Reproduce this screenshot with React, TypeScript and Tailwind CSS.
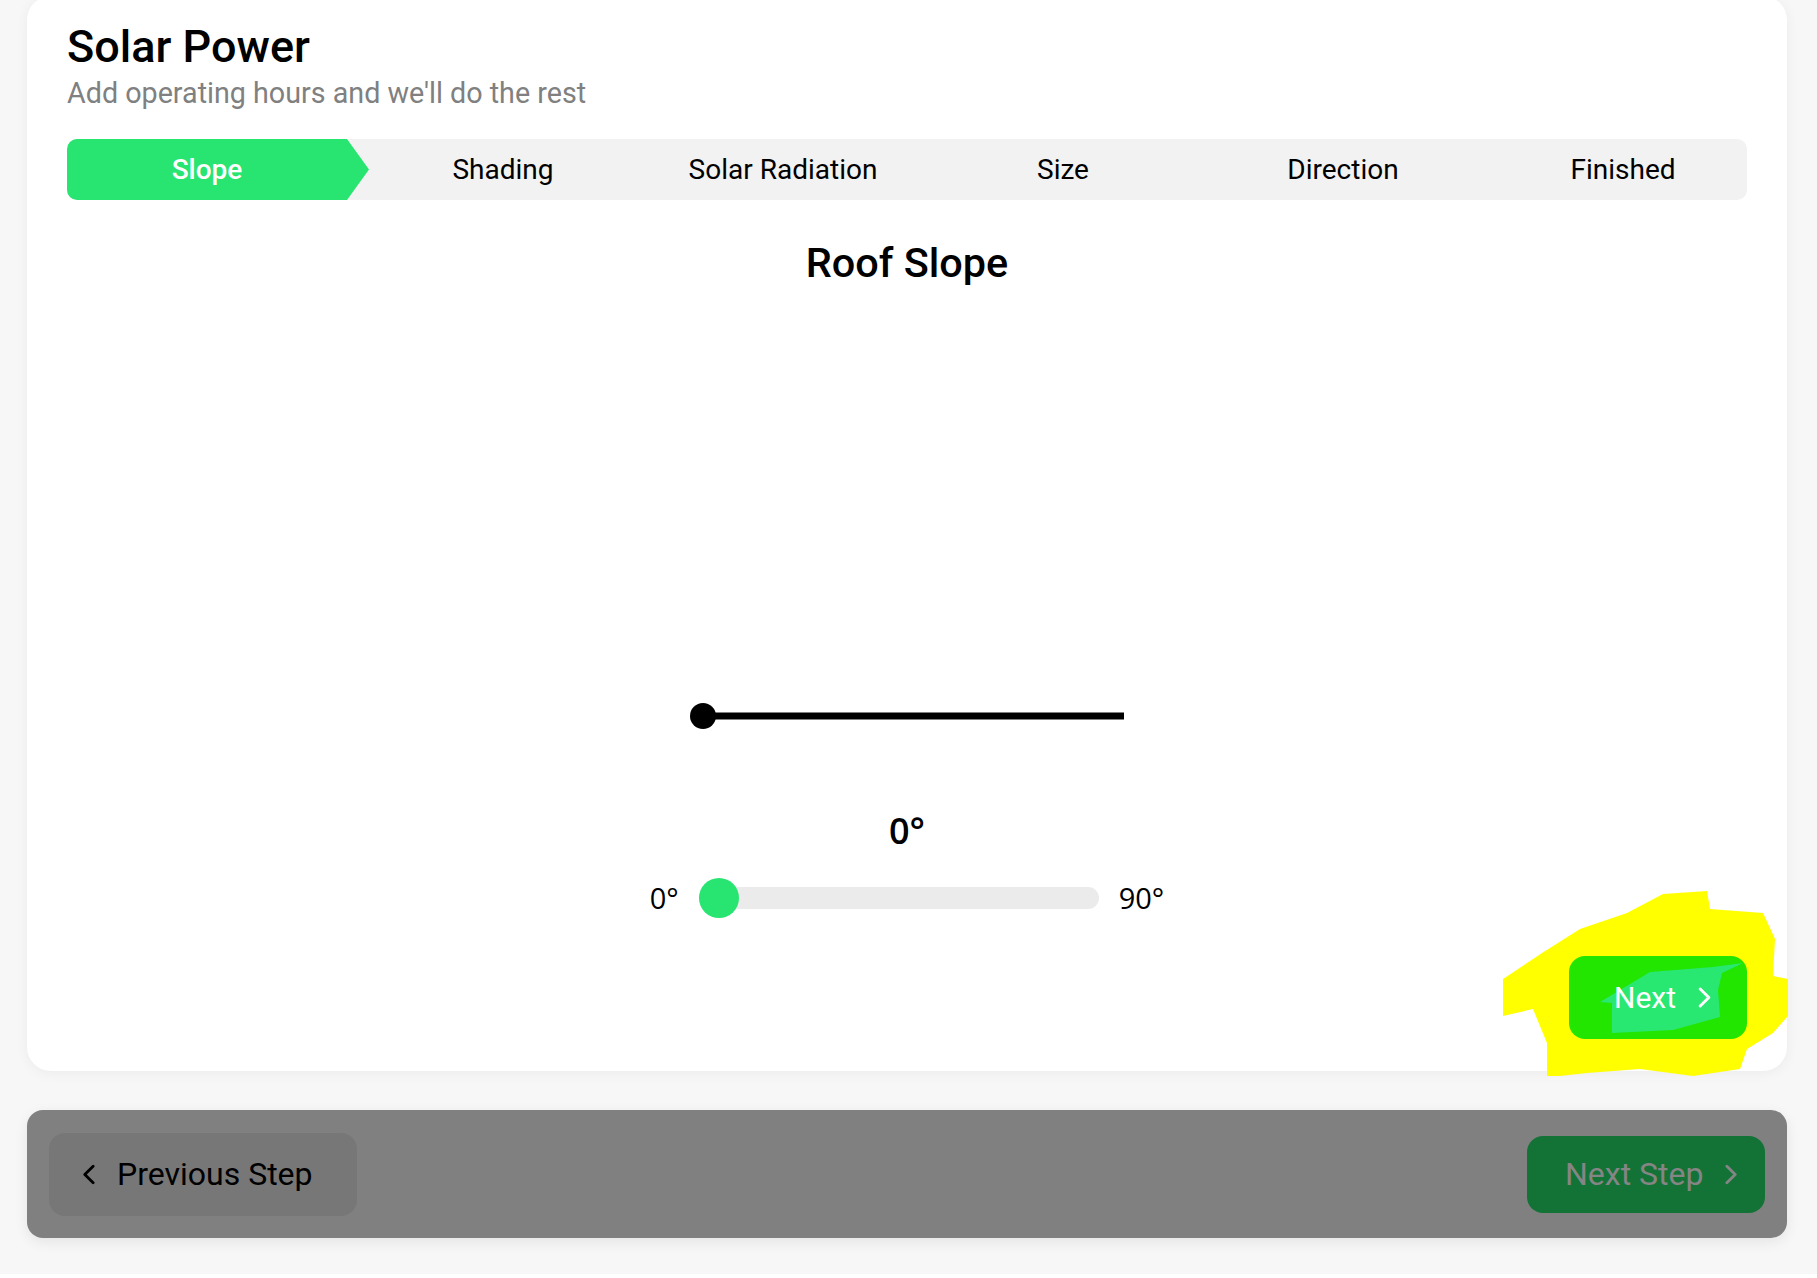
import React from "react";

const TABS = ["Slope", "Shading", "Solar Radiation", "Size", "Direction", "Finished"];

function ChevronLeft({ className }: { className?: string }) {
  return (
    <svg viewBox="0 0 14 22" className={className} fill="none" stroke="currentColor" strokeWidth={3} strokeLinecap="round" strokeLinejoin="round">
      <path d="M12 2 L3 11 L12 20" />
    </svg>
  );
}

function ChevronRight({ className }: { className?: string }) {
  return (
    <svg viewBox="0 0 14 22" className={className} fill="none" stroke="currentColor" strokeWidth={3} strokeLinecap="round" strokeLinejoin="round">
      <path d="M2 2 L11 11 L2 20" />
    </svg>
  );
}

function StepTabs() {
  return (
    <div className="mt-[30px] flex h-[61px] rounded-[10px] bg-[#f2f2f2]">
      {TABS.map((t, i) =>
        i === 0 ? (
          <div
            key={t}
            className="relative z-10 mr-[-22px] flex w-[302px] items-center rounded-l-[10px] bg-[#27e570] [clip-path:polygon(0_0,280px_0,100%_50%,280px_100%,0_100%)]"
          >
            <span className="w-[280px] text-center text-[28px] font-medium text-white">{t}</span>
          </div>
        ) : (
          <div key={t} className="flex flex-1 items-center justify-center pl-[32px] text-[28px] text-black">
            {t}
          </div>
        )
      )}
    </div>
  );
}

function SlopeDrawing() {
  return (
    <svg width={440} height={432} viewBox="0 0 440 432" className="mt-[10px]">
      <line x1={16} y1={419} x2={437} y2={419} stroke="#000" strokeWidth={7} />
      <circle cx={16} cy={419} r={13} fill="#000" />
    </svg>
  );
}

function AngleSlider() {
  return (
    <div className="mt-[25px] flex h-[40px] items-center gap-[20px] font-['Open_Sans',sans-serif] text-[29px] text-black">
      <span>0°</span>
      <div className="relative h-[22px] w-[400px] rounded-full bg-[#ebebeb]">
        <div className="absolute left-0 top-1/2 h-[40px] w-[40px] -translate-y-1/2 rounded-full bg-[#27e570]" />
      </div>
      <span>90°</span>
    </div>
  );
}

export default function App() {
  return (
    <div className="relative min-h-screen w-full bg-[#f7f7f7] font-['Roboto',sans-serif]">
      <div className="pl-[27px] pr-[30px] pt-0">
        <section className="mt-[-4px] rounded-[24px] bg-white px-[40px] pb-[32px] pt-[25px] shadow-[0_2px_14px_rgba(0,0,0,0.05)]">
          <h1 className="text-[45px] font-medium leading-[52px] text-black">Solar Power</h1>
          <p className="mt-[4px] text-[28.7px] leading-[32px] text-[#808080]">Add operating hours and we'll do the rest</p>

          <StepTabs />

          <div className="flex flex-col items-center">
            <h2 className="mt-[39px] text-[41.4px] font-medium leading-[48px] text-black">Roof Slope</h2>
            <SlopeDrawing />
            <div className="mt-[80px] font-['Open_Sans',sans-serif] text-[36px] font-semibold leading-[44px] text-black">0°</div>
            <AngleSlider />
          </div>

          <div className="mt-[38px] flex justify-end">
            <button className="relative z-10 flex h-[83px] w-[178px] items-center overflow-hidden rounded-[16px] bg-[#22e500] pl-[45px] text-white">
              <svg className="absolute inset-0" width={178} height={83} viewBox="0 0 178 83">
                <polygon points="31,46 81,16 144,11 174,7 153,17 149,34 151,61 104,74 43,77 43,47" fill="#29e872" />
              </svg>
              <span className="relative text-[30px]">Next</span>
              <ChevronRight className="relative ml-[22px] h-[21px] w-[14px]" />
            </button>
          </div>
        </section>

        <div className="mt-[39px] flex h-[128px] items-center justify-between rounded-[16px] bg-[#808080] px-[22px] shadow-[0_4px_14px_rgba(0,0,0,0.08)]">
          <button className="flex h-[83px] w-[308px] items-center rounded-[16px] bg-[#777777] pl-[33px] text-black">
            <ChevronLeft className="h-[21px] w-[13px]" />
            <span className="ml-[22px] text-[32px]">Previous Step</span>
          </button>
          <button className="flex h-[77px] w-[238px] items-center rounded-[16px] bg-[#137336] pl-[38px] text-[#858585]">
            <span className="text-[32px]">Next Step</span>
            <ChevronRight className="ml-[22px] h-[21px] w-[13px]" />
          </button>
        </div>
      </div>

      <svg className="pointer-events-none absolute left-[1490px] top-[880px]" width={310} height={210} viewBox="0 0 310 210">
        <polygon
          points="13,103 52,77 90,53 137,37 173,18 217,15 220,33 273,37 285,63 283,100 298,103 298,140 283,157 257,173 250,193 203,200 150,193 97,197 70,200 57,200 57,167 43,133 13,140"
          fill="#ffff00"
        />
      </svg>
    </div>
  );
}
